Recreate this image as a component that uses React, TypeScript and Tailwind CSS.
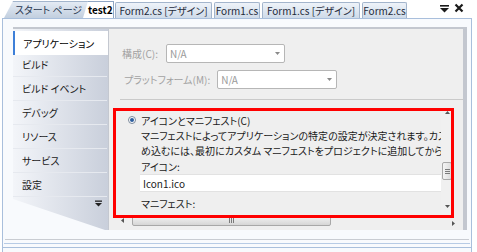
import React from "react";

const font = {
  fontFamily: '"Noto Sans CJK JP", "Noto Sans", sans-serif',
  fontFeatureSettings: '"palt"',
};

function Tab({ label, w }: { label: string; w: string }) {
  return (
    <div
      className={
        "h-[16px] flex items-center justify-center border border-b-0 rounded-t-[2px] text-[10px] leading-none whitespace-nowrap bg-gradient-to-b from-[#eef3f9] to-[#cfdbe9] border-[#a3b5cc] text-[#1e2a3a] " +
        w
      }
    >
      {label}
    </div>
  );
}

const navItems = ["ビルド", "ビルド イベント", "デバッグ", "リソース", "サービス", "設定"];

export default function App() {
  return (
    <div className="w-[477px] h-[252px] bg-white overflow-hidden flex flex-col text-black" style={font}>
      {/* Tab strip */}
      <div className="h-[18px] flex items-end relative">
        <div className="h-[17px] w-[84px] ml-[4px] flex items-center pl-[11px] text-[10px] leading-none text-[#2a3850] bg-gradient-to-b from-[#e4ebf4] to-[#c2cfdf] border-t border-[#a3b5cc] [clip-path:polygon(9px_0,100%_0,100%_100%,0_100%)] whitespace-nowrap overflow-hidden">
          スタート ページ
        </div>
        <div className="-ml-[5px] w-[31px] h-[17px] flex items-center pl-[5px] bg-white border-t border-r border-[#8fa6c4] [clip-path:polygon(5px_0,100%_0,100%_100%,0_100%)] text-[10px] font-bold leading-none whitespace-nowrap">
          test2
        </div>
        <div className="flex items-end gap-[2px] ml-[1px]">
          <Tab label="Form2.cs [デザイン]" w="w-[97px]" />
          <Tab label="Form1.cs" w="w-[46px]" />
          <Tab label="Form1.cs [デザイン]" w="w-[98px]" />
          <Tab label="Form2.cs" w="w-[45px]" />
        </div>
        <div className="ml-auto mr-[13px] flex items-center gap-[5px] h-[18px] pb-[2px]">
          <svg width="9" height="9" viewBox="0 0 9 9">
            <rect x="0" y="1" width="9" height="1.6" fill="#1a1a1a" />
            <polygon points="0,4 9,4 4.5,8.5" fill="#1a1a1a" />
          </svg>
          <svg width="10" height="10" viewBox="0 0 10 10">
            <path d="M1.5 1.5 L8.5 8.5 M8.5 1.5 L1.5 8.5" stroke="#1a1a1a" strokeWidth="2.2" />
          </svg>
        </div>
      </div>

      {/* Document frame */}
      <div className="flex-1 ml-[2px] mr-[5px] border border-b-0 border-[#a9bfdc] flex flex-col bg-[#f8fafd]">
        <div className="flex-1 pl-[10px] pt-[8px] pr-[4px] flex flex-col">
          <div className="h-[203px] flex border-t-[2px] border-r-[4px] border-[#c3c7cf]">
            {/* Nav */}
            <div className="w-[95px] h-full relative shrink-0">
              <div className="absolute inset-0 bg-gradient-to-r from-[#f3f5f9] to-[#c9cfdb] [clip-path:polygon(0_0,100%_0,100%_100%,92px_100%,0_170px)]" />
              <div className="relative flex flex-col pt-[2px]">
                <div className="h-[24px] -mb-[2px] bg-white border-l-[2px] border-[#3d7fd8] flex items-center pl-[8px] text-[10px] relative z-10">
                  アプリケーション
                </div>
                {navItems.map((t) => (
                  <div
                    key={t}
                    className="h-[24px] flex items-center pl-[9px] text-[10px] text-[#1a1a1a] border-b border-[#e6e9ef] mr-[1px]"
                  >
                    {t}
                  </div>
                ))}
                <div className="flex justify-end pr-[6px] pt-[3px]">
                  <svg width="7" height="7" viewBox="0 0 7 7">
                    <rect x="0" y="0.5" width="7" height="1.3" fill="#222" />
                    <polygon points="0,3 7,3 3.5,6.5" fill="#222" />
                  </svg>
                </div>
              </div>
            </div>

            {/* Content */}
            <div className="flex-1 min-w-0 bg-[#efefef] border-l border-[#c4c8d0] flex flex-col">
              <div className="flex items-center h-[18px] mt-[15px] pl-[13px] gap-[8px] text-[10px] text-[#a2a2a2]">
                <span>構成(C):</span>
                <div className="w-[119px] h-[19px] bg-white border border-[#b6b6b6] rounded-[2px] flex items-center pl-[3px] pr-[4px] text-[#9a9a9a]">
                  <span>N/A</span>
                  <svg className="ml-auto" width="5" height="3" viewBox="0 0 5 3">
                    <polygon points="0,0 5,0 2.5,3" fill="#8a8a8a" />
                  </svg>
                </div>
              </div>
              <div className="flex items-center h-[19px] mt-[8px] pl-[15px] gap-[7px] text-[10px] text-[#a2a2a2]">
                <span>プラットフォーム(M):</span>
                <div className="w-[120px] h-[19px] bg-white border border-[#b6b6b6] rounded-[2px] flex items-center pl-[3px] pr-[4px] text-[#9a9a9a]">
                  <span>N/A</span>
                  <svg className="ml-auto" width="5" height="3" viewBox="0 0 5 3">
                    <polygon points="0,0 5,0 2.5,3" fill="#8a8a8a" />
                  </svg>
                </div>
              </div>
              <div className="mt-[10px] ml-[11px] h-[1px] bg-[#cacaca]" />

              {/* Scroll region */}
              <div className="mt-[8px] ml-[4px] mr-[10px] flex-1 flex flex-col relative">
                <div className="h-[106px] flex">
                  <div className="flex-1 min-w-0 overflow-hidden flex flex-col pl-[28px] pt-[4px] text-[10px] text-[#1a1a1a]">
                    <div className="h-[16px] flex items-center gap-[5px] -ml-[13px]">
                      <span className="w-[8px] h-[8px] rounded-full border border-[#7c8a9c] bg-white flex items-center justify-center">
                        <span className="w-[4px] h-[4px] rounded-full bg-[#2d5e9e]" />
                      </span>
                      <span>アイコンとマニフェスト(C)</span>
                    </div>
                    <div className="h-[15px] flex items-center whitespace-nowrap">
                      マニフェストによってアプリケーションの特定の設定が決定されます。カスタム マニフェストを埋
                    </div>
                    <div className="h-[15px] flex items-center whitespace-nowrap">
                      め込むには、最初にカスタム マニフェストをプロジェクトに追加してから、
                    </div>
                    <div className="h-[16px] flex items-center">アイコン:</div>
                    <div className="h-[18px] bg-white border-t border-b border-[#e2e2e2] flex items-center pl-[3px] -ml-[1px]">
                      Icon1.ico
                    </div>
                    <div className="h-[18px] flex items-center mt-[2px]">マニフェスト:</div>
                  </div>
                  {/* Vertical scrollbar */}
                  <div className="w-[12px] shrink-0 flex flex-col items-center bg-[#f0f0f0]">
                    <svg className="mt-[3px]" width="5" height="3" viewBox="0 0 5 3">
                      <polygon points="0,3 5,3 2.5,0" fill="#555" />
                    </svg>
                    <div className="mt-[48px] w-[10px] h-[18px] rounded-[2px] border border-[#a8a8a8] bg-gradient-to-r from-[#f4f4f4] to-[#dcdcdc] flex flex-col items-center justify-center gap-[1px]">
                      <span className="w-[5px] h-[1px] bg-[#7a7a7a]" />
                      <span className="w-[5px] h-[1px] bg-[#7a7a7a]" />
                      <span className="w-[5px] h-[1px] bg-[#7a7a7a]" />
                    </div>
                    <svg className="mt-auto mb-[6px]" width="5" height="3" viewBox="0 0 5 3">
                      <polygon points="0,0 5,0 2.5,3" fill="#555" />
                    </svg>
                  </div>
                </div>
                {/* Horizontal scrollbar */}
                <div className="h-[12px] flex items-center">
                  <svg className="ml-[8px]" width="3" height="5" viewBox="0 0 3 5">
                    <polygon points="3,0 3,5 0,2.5" fill="#555" />
                  </svg>
                  <div className="ml-[8px] w-[199px] h-[11px] rounded-[2px] border border-[#a8a8a8] bg-gradient-to-b from-[#f4f4f4] to-[#d6d6d6] flex items-center justify-center gap-[1px]">
                    <span className="w-[1px] h-[5px] bg-[#7a7a7a]" />
                    <span className="w-[1px] h-[5px] bg-[#7a7a7a]" />
                    <span className="w-[1px] h-[5px] bg-[#7a7a7a]" />
                  </div>
                  <svg className="ml-auto -mr-[2px] mt-[6px]" width="3" height="5" viewBox="0 0 3 5">
                    <polygon points="0,0 3,2.5 0,5" fill="#555" />
                  </svg>
                </div>

                {/* Red highlight overlay */}
                <div className="absolute left-0 top-0 w-[341px] h-[110px] border-[3px] border-[#ff0000] pointer-events-none" />
              </div>
            </div>
          </div>
        </div>
        {/* bottom frame lines */}
        <div className="h-[16px] flex flex-col">
          <div className="h-[4px] mx-[2px] border-b border-[#c9ccd2]" />
          <div className="h-[4px] mx-[1px] border-b border-[#b7cbe5]" />
          <div className="h-[4px] border-b border-[#a9bfdc]" />
        </div>
      </div>
    </div>
  );
}
